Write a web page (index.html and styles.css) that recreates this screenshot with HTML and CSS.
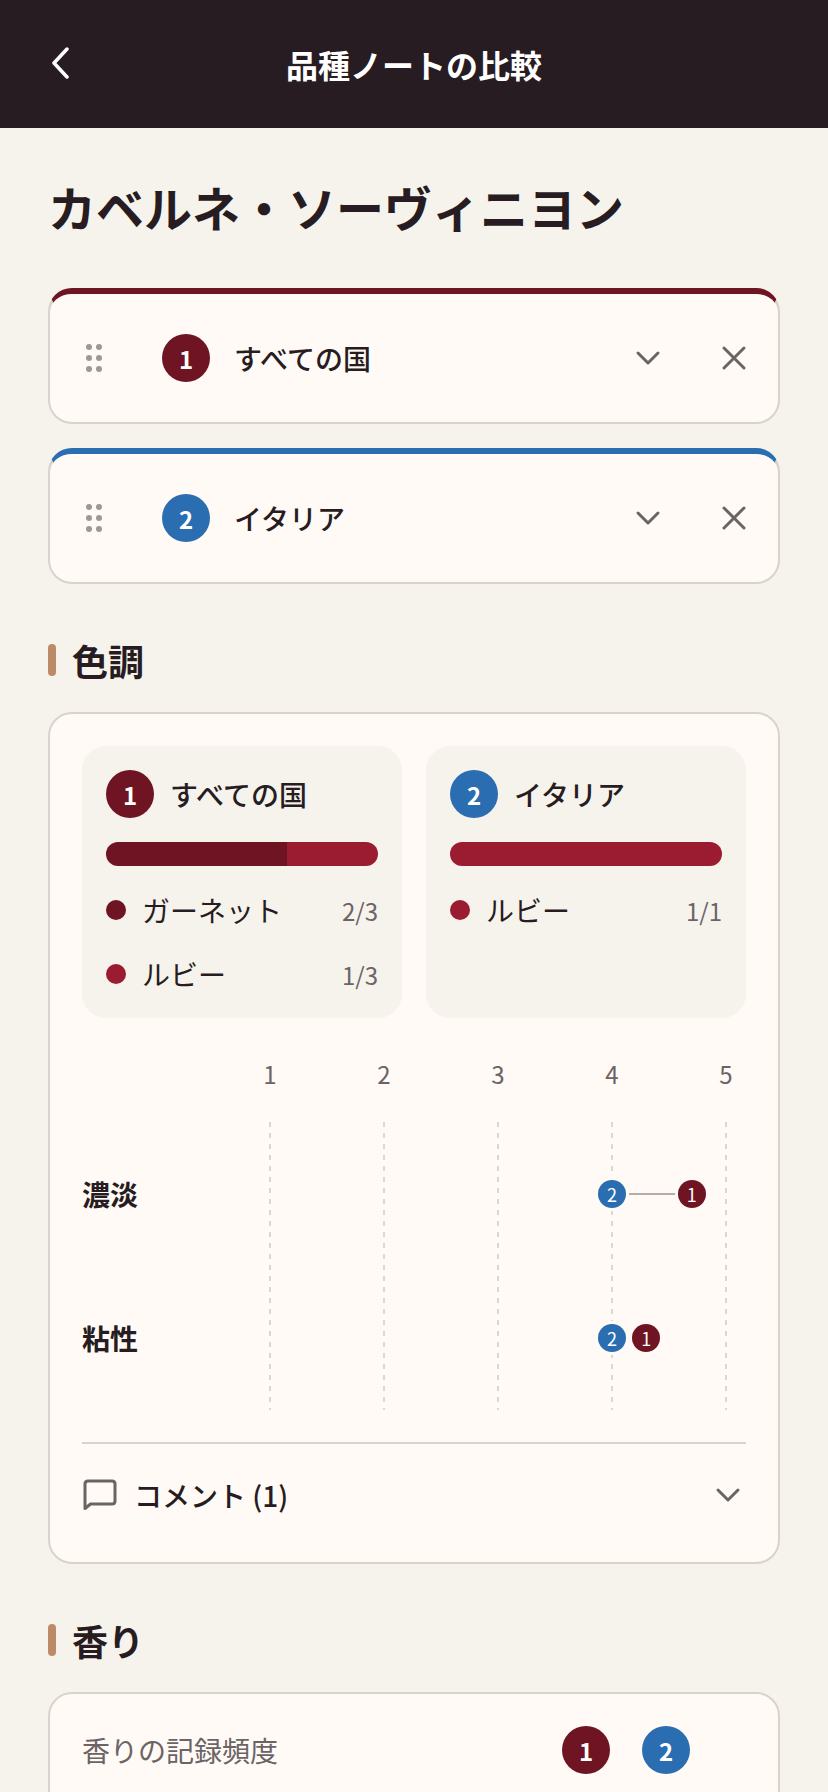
FILE: index.html
```html
<!DOCTYPE html>
<html lang="ja">
<head>
    <meta charset="UTF-8">
    <meta name="viewport" content="width=device-width, initial-scale=1.0">
    <title>品種ノートの比較</title>
    <link rel="stylesheet" href="styles.css">
</head>
<body>
    <header class="top-bar">
        <svg class="back-icon" viewBox="0 0 20 32" width="20" height="32">
            <path d="M17 2 L4 16 L17 30" />
        </svg>
        <div class="top-title">品種ノートの比較</div>
    </header>

    <main class="content">
        <h1 class="variety-name">カベルネ・ソーヴィニヨン</h1>

        <div class="filter-card filter-wine">
            <svg class="grip" viewBox="0 0 16 28" width="16" height="28">
                <circle cx="3" cy="3" r="3" /><circle cx="13" cy="3" r="3" />
                <circle cx="3" cy="14" r="3" /><circle cx="13" cy="14" r="3" />
                <circle cx="3" cy="25" r="3" /><circle cx="13" cy="25" r="3" />
            </svg>
            <span class="badge badge-wine">1</span>
            <span class="filter-name">すべての国</span>
            <svg class="icon-line" viewBox="0 0 28 28" width="28" height="28"><path d="M4 9 L14 19 L24 9" /></svg>
            <svg class="icon-line icon-close" viewBox="0 0 28 28" width="28" height="28"><path d="M4 4 L24 24 M24 4 L4 24" /></svg>
        </div>

        <div class="filter-card filter-blue">
            <svg class="grip" viewBox="0 0 16 28" width="16" height="28">
                <circle cx="3" cy="3" r="3" /><circle cx="13" cy="3" r="3" />
                <circle cx="3" cy="14" r="3" /><circle cx="13" cy="14" r="3" />
                <circle cx="3" cy="25" r="3" /><circle cx="13" cy="25" r="3" />
            </svg>
            <span class="badge badge-blue">2</span>
            <span class="filter-name">イタリア</span>
            <svg class="icon-line" viewBox="0 0 28 28" width="28" height="28"><path d="M4 9 L14 19 L24 9" /></svg>
            <svg class="icon-line icon-close" viewBox="0 0 28 28" width="28" height="28"><path d="M4 4 L24 24 M24 4 L4 24" /></svg>
        </div>

        <h2 class="section-title">色調</h2>
        <section class="panel">
            <div class="color-grid">
                <div class="color-box">
                    <div class="color-head">
                        <span class="badge badge-wine">1</span>
                        <span class="filter-name">すべての国</span>
                    </div>
                    <div class="color-bar">
                        <span class="seg-garnet" style="width: 66.67%"></span>
                        <span class="seg-ruby" style="width: 33.33%"></span>
                    </div>
                    <div class="color-row">
                        <span class="color-dot seg-garnet"></span>
                        <span class="color-name">ガーネット</span>
                        <span class="color-count">2/3</span>
                    </div>
                    <div class="color-row">
                        <span class="color-dot seg-ruby"></span>
                        <span class="color-name">ルビー</span>
                        <span class="color-count">1/3</span>
                    </div>
                </div>
                <div class="color-box">
                    <div class="color-head">
                        <span class="badge badge-blue">2</span>
                        <span class="filter-name">イタリア</span>
                    </div>
                    <div class="color-bar">
                        <span class="seg-ruby" style="width: 100%"></span>
                    </div>
                    <div class="color-row">
                        <span class="color-dot seg-ruby"></span>
                        <span class="color-name">ルビー</span>
                        <span class="color-count">1/1</span>
                    </div>
                </div>
            </div>

            <div class="scale-head">
                <span>1</span><span>2</span><span>3</span><span>4</span><span>5</span>
            </div>
            <div class="chart">
                <div class="grid-lines">
                    <span></span><span></span><span></span><span></span><span></span>
                </div>
                <div class="chart-row">
                    <span class="chart-label">濃淡</span>
                    <div class="track">
                        <span class="link" style="left: 75%; width: 17.5%"></span>
                        <span class="dot badge-blue" style="left: 75%">2</span>
                        <span class="dot badge-wine" style="left: 92.5%">1</span>
                    </div>
                </div>
                <div class="chart-row">
                    <span class="chart-label">粘性</span>
                    <div class="track">
                        <span class="link" style="left: 75%; width: 7.5%"></span>
                        <span class="dot badge-blue" style="left: 75%">2</span>
                        <span class="dot badge-wine" style="left: 82.5%">1</span>
                    </div>
                </div>
            </div>

            <div class="comment-row">
                <svg class="comment-icon" viewBox="0 0 34 32" width="34" height="32">
                    <path d="M2 29.5 V5 Q2 2 5 2 H29 Q32 2 32 5 V22 Q32 25 29 25 H7.5 Z" />
                </svg>
                <span class="comment-text">コメント (1)</span>
                <svg class="icon-line" viewBox="0 0 28 28" width="28" height="28"><path d="M4 9 L14 19 L24 9" /></svg>
            </div>
        </section>

        <h2 class="section-title">香り</h2>
        <section class="panel panel-open">
            <div class="freq-row">
                <span class="freq-label">香りの記録頻度</span>
                <div class="freq-badges">
                    <span class="badge badge-wine">1</span>
                    <span class="badge badge-blue">2</span>
                </div>
            </div>
        </section>
    </main>
</body>
</html>
```

FILE: styles.css
```css
html, body {
    height: 1792px;
    overflow: hidden;
}
body {
    margin: 0;
    background: #f6f3ec;
    color: #271c22;
    font-family: "Noto Sans CJK JP", "Noto Sans", sans-serif;
}
.top-bar {
    height: 128px;
    background: #271c22;
    display: flex;
    align-items: center;
    justify-content: center;
    position: relative;
}
.back-icon {
    position: absolute;
    left: 50px;
    top: 47px;
    fill: none;
    stroke: #fff;
    stroke-width: 3.5;
    stroke-linecap: round;
    stroke-linejoin: round;
}
.top-title {
    color: #fff;
    font-size: 32px;
    font-weight: 700;
    line-height: 44px;
}
.content {
    padding: 44px 48px 0;
}
.variety-name {
    margin: 0 0 48px;
    font-size: 48px;
    font-weight: 700;
    line-height: 68px;
}
.filter-card {
    box-sizing: border-box;
    height: 136px;
    margin-bottom: 24px;
    padding: 0 30px 0 36px;
    display: flex;
    align-items: center;
    background: #fffaf5;
    border: 2px solid #d9d4cb;
    border-radius: 24px;
}
.filter-wine {
    border-top: 6px solid #6e1423;
}
.filter-blue {
    border-top: 6px solid #2a6db0;
}
.grip {
    fill: #a09890;
    margin-right: 60px;
    flex: none;
}
.badge {
    width: 48px;
    height: 48px;
    border-radius: 50%;
    flex: none;
    display: flex;
    align-items: center;
    justify-content: center;
    color: #fff;
    font-size: 24px;
    font-weight: 700;
}
.badge-wine {
    background: #6e1423;
}
.badge-blue {
    background: #2a6db0;
}
.filter-name {
    margin-left: 24px;
    font-size: 28px;
    font-weight: 500;
    flex: 1;
}
.icon-line {
    flex: none;
    fill: none;
    stroke: #6b6365;
    stroke-width: 3;
    stroke-linecap: round;
    stroke-linejoin: round;
}
.icon-close {
    margin-left: 58px;
}
.section-title {
    margin: 51px 0 27px;
    padding-left: 24px;
    position: relative;
    font-size: 36px;
    font-weight: 700;
    line-height: 50px;
}
.section-title::before {
    content: "";
    position: absolute;
    left: 0;
    top: 9px;
    width: 8px;
    height: 32px;
    border-radius: 4px;
    background: #bc8a66;
}
.panel {
    box-sizing: border-box;
    background: #fffaf5;
    border: 2px solid #d9d4cb;
    border-radius: 24px;
    padding: 32px 32px 32px;
}
.panel-open {
    min-height: 200px;
}
.color-grid {
    display: grid;
    grid-template-columns: 320px 320px;
    gap: 24px;
}
.color-box {
    background: #f6f3ec;
    border-radius: 24px;
    padding: 24px 24px 24px;
}
.color-head {
    display: flex;
    align-items: center;
}
.color-head .filter-name {
    margin-left: 16px;
}
.color-bar {
    height: 24px;
    margin: 24px 0;
    border-radius: 12px;
    overflow: hidden;
    display: flex;
}
.seg-garnet {
    background: #6e1423;
}
.seg-ruby {
    background: #9b1c31;
}
.color-row {
    height: 40px;
    display: flex;
    align-items: center;
    margin-bottom: 24px;
}
.color-row:last-child {
    margin-bottom: 0;
}
.color-dot {
    width: 20px;
    height: 20px;
    border-radius: 50%;
    margin-right: 16px;
}
.color-name {
    flex: 1;
    font-size: 28px;
}
.color-count {
    font-size: 24px;
    color: #6b6365;
}
.scale-head {
    margin: 35px 20px 29px 188px;
    height: 40px;
    display: flex;
    justify-content: space-between;
    align-items: center;
    color: #6b6365;
    font-size: 24px;
}
.scale-head span {
    width: 0;
    display: flex;
    justify-content: center;
}
.chart {
    position: relative;
}
.grid-lines {
    position: absolute;
    left: 187px;
    right: 19px;
    top: 0;
    bottom: 0;
    display: flex;
    justify-content: space-between;
}
.grid-lines span {
    width: 2px;
    background: repeating-linear-gradient(to bottom, #dcd8d1 0 5px, transparent 5px 11px);
}
.chart-row {
    height: 144px;
    display: flex;
    align-items: center;
}
.chart-label {
    width: 188px;
    flex: none;
    font-size: 28px;
    font-weight: 600;
}
.track {
    width: 456px;
    height: 28px;
    position: relative;
}
.link {
    position: absolute;
    top: 13px;
    height: 2px;
    background: #b8aca5;
}
.dot {
    position: absolute;
    top: 0;
    width: 28px;
    height: 28px;
    margin-left: -14px;
    border-radius: 50%;
    box-shadow: 0 0 0 3px #fffaf5;
    display: flex;
    align-items: center;
    justify-content: center;
    color: #fff;
    font-size: 18px;
}
.comment-row {
    margin-top: 32px;
    padding: 28px 4px 12px 1px;
    border-top: 2px solid #d9d4cb;
    display: flex;
    align-items: center;
}
.comment-icon {
    flex: none;
    fill: none;
    stroke: #6b6365;
    stroke-width: 3;
    stroke-linejoin: round;
}
.comment-text {
    flex: 1;
    margin-left: 17px;
    font-size: 28px;
    font-weight: 500;
    line-height: 46px;
}
.freq-row {
    display: flex;
    align-items: center;
    justify-content: space-between;
}
.freq-label {
    font-size: 28px;
    color: #6b6365;
}
.freq-badges {
    display: flex;
    gap: 32px;
    margin-right: 56px;
}
```
